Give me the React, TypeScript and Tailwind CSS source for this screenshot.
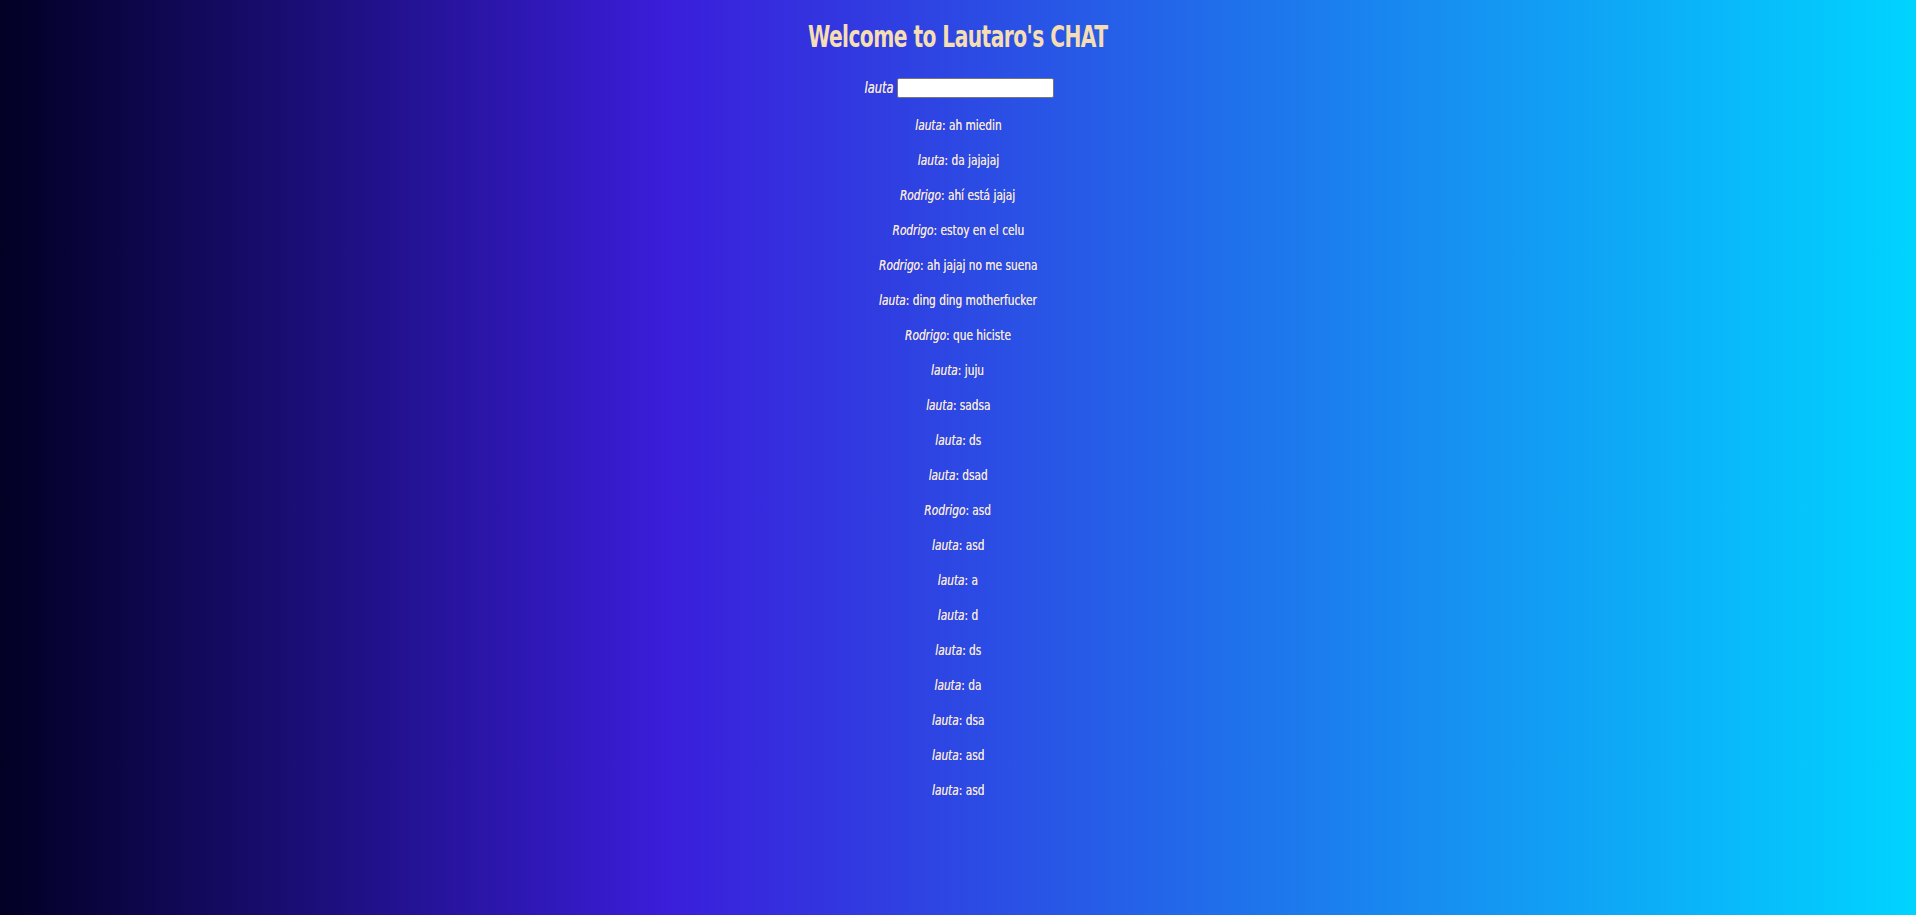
const messages = [
  { user: 'lauta', text: 'ah miedin' },
  { user: 'lauta', text: 'da jajajaj' },
  { user: 'Rodrigo', text: 'ahí está jajaj' },
  { user: 'Rodrigo', text: 'estoy en el celu' },
  { user: 'Rodrigo', text: 'ah jajaj no me suena' },
  { user: 'lauta', text: 'ding ding motherfucker' },
  { user: 'Rodrigo', text: 'que hiciste' },
  { user: 'lauta', text: 'juju' },
  { user: 'lauta', text: 'sadsa' },
  { user: 'lauta', text: 'ds' },
  { user: 'lauta', text: 'dsad' },
  { user: 'Rodrigo', text: 'asd' },
  { user: 'lauta', text: 'asd' },
  { user: 'lauta', text: 'a' },
  { user: 'lauta', text: 'd' },
  { user: 'lauta', text: 'ds' },
  { user: 'lauta', text: 'da' },
  { user: 'lauta', text: 'dsa' },
  { user: 'lauta', text: 'asd' },
  { user: 'lauta', text: 'asd' },
];

const App = () => {
  return (
    <div className="min-h-screen w-full bg-[linear-gradient(90deg,#020024_0%,#3a1edb_35%,#00d4ff_100%)] text-[#f5deb3] font-['Liberation_Sans_Narrow','DejaVu_Sans_Condensed',sans-serif]">
      <div className="flex flex-col items-center pt-[21px]">
        <h1 className="text-[30px] font-bold leading-[32px] tracking-tight scale-x-[0.75]">Welcome to Lautaro's CHAT</h1>

        <form className="mt-[24px] flex items-center gap-[3px]" onSubmit={(e) => e.preventDefault()}>
          <label className="italic text-[15px] scale-x-[0.85] -mr-[3px] text-[#f3e4dc] [text-shadow:0_0_0.5px_#f3e4dc]">lauta</label>
          <input type="text" className="w-[157px] h-[20px] bg-white border border-[#767676] rounded-[2px] text-black text-sm px-1" />
        </form>

        <div className="mt-[16px] flex flex-col items-center gap-[17px]">
          {messages.map((msg, index) => (
            <p key={index} className="text-[14px] leading-[18px] text-[#f3e4dc] scale-x-[0.84] [text-shadow:0_0_0.4px_#f3e4dc]">
              <em>{msg.user}</em>: {msg.text}
            </p>
          ))}
        </div>
      </div>
    </div>
  );
};

export default App;
